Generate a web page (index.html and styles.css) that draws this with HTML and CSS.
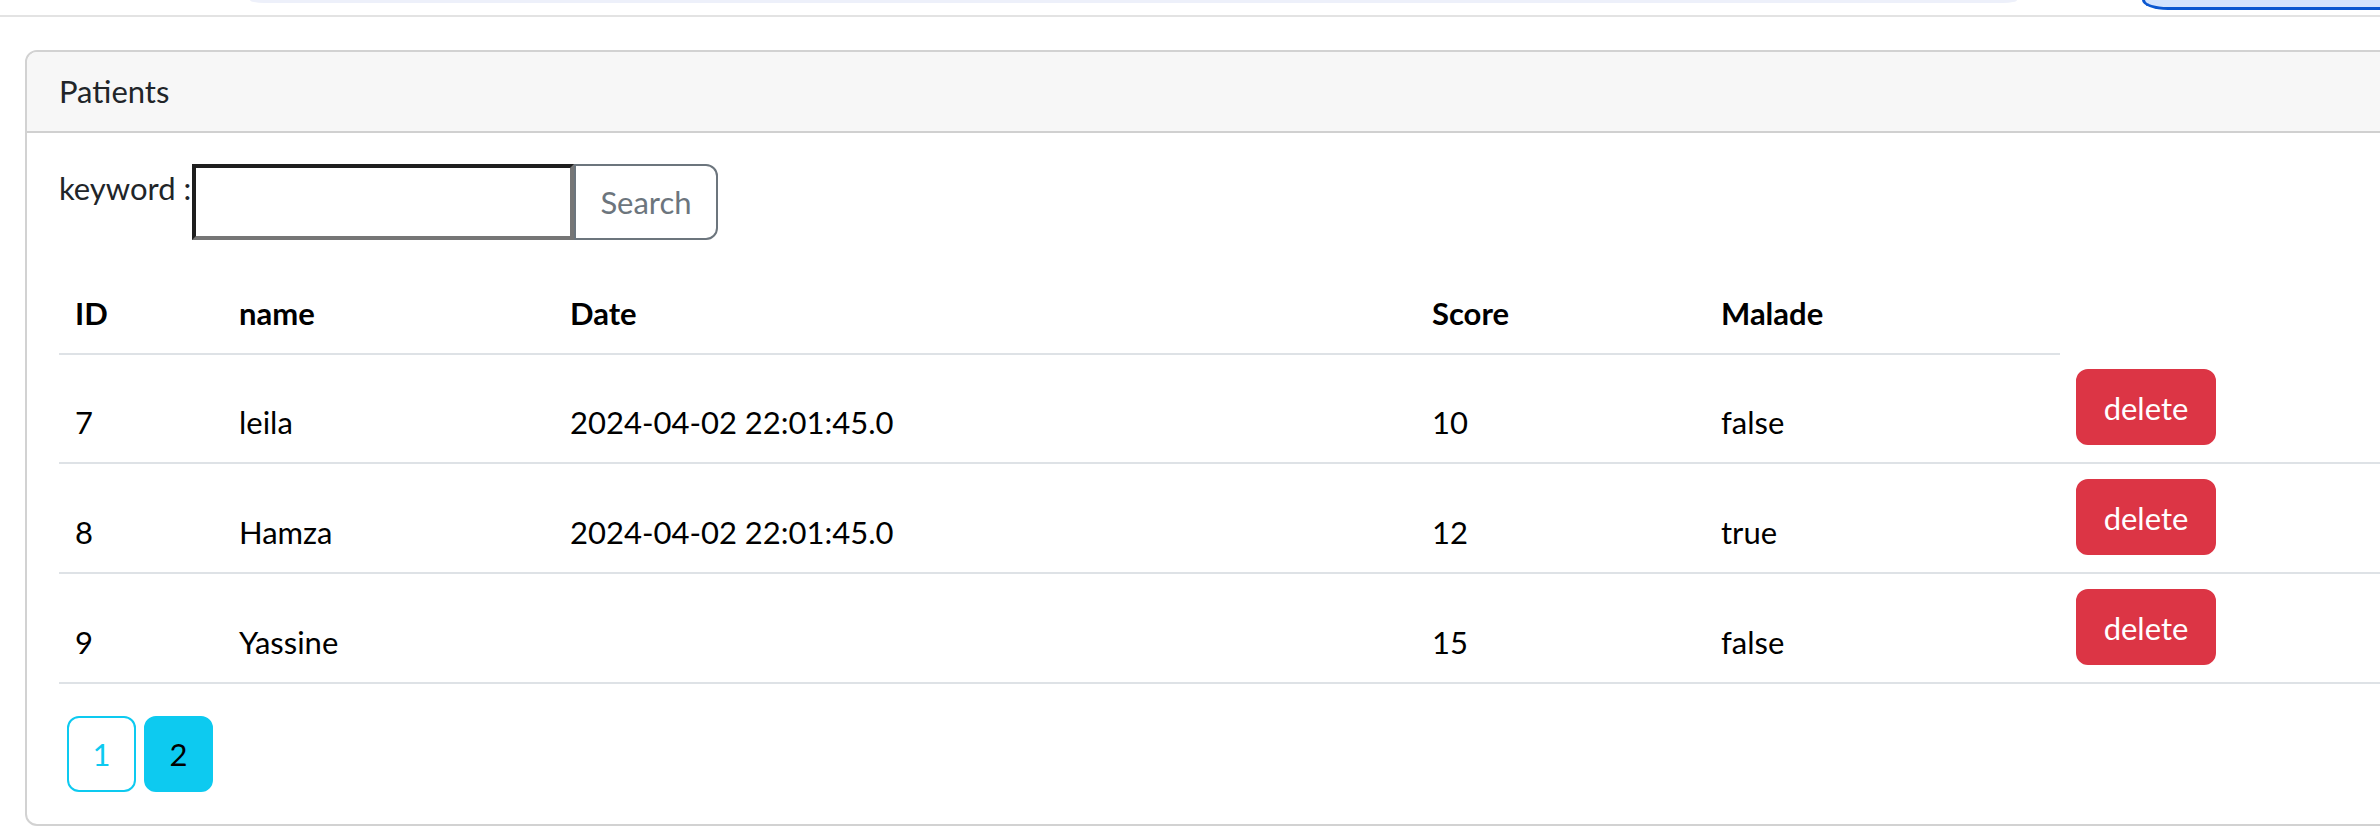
FILE: index.html
```html
<!DOCTYPE html>
<html lang="fr">
<head>
<meta charset="utf-8">
<title>Patients</title>
<link rel="stylesheet" href="styles.css">
</head>
<body>
<div class="chrome">
  <div class="omnibox"></div>
  <div class="profile"></div>
</div>
<main class="page">
  <section class="card">
    <div class="card-header">Patients</div>
    <div class="card-body">
      <form class="search">
        <label class="search-label" for="kw">keyword :</label>
        <input class="search-input" id="kw" type="text">
        <button class="btn-search" type="button">Search</button>
      </form>
      <table class="patients">
        <colgroup>
          <col class="c-id"><col class="c-name"><col class="c-date"><col class="c-score"><col class="c-malade"><col class="c-action">
        </colgroup>
        <thead>
          <tr><th>ID</th><th>name</th><th>Date</th><th>Score</th><th>Malade</th></tr>
        </thead>
        <tbody>
          <tr><td>7</td><td>leila</td><td>2024-04-02 22:01:45.0</td><td>10</td><td>false</td><td class="act"><a class="btn-delete">delete</a></td></tr>
          <tr><td>8</td><td>Hamza</td><td>2024-04-02 22:01:45.0</td><td>12</td><td>true</td><td class="act"><a class="btn-delete">delete</a></td></tr>
          <tr><td>9</td><td>Yassine</td><td></td><td>15</td><td>false</td><td class="act"><a class="btn-delete">delete</a></td></tr>
        </tbody>
      </table>
      <nav class="pager">
        <a class="page-btn">1</a>
        <a class="page-btn active">2</a>
      </nav>
    </div>
  </section>
</main>
</body>
</html>
```

FILE: styles.css
```css
html, body {
  margin: 0;
  padding: 0;
}
body {
  width: 2380px;
  height: 832px;
  overflow: hidden;
  background: #fff;
  font-family: Lato, "Liberation Sans", sans-serif;
  font-size: 31px;
  line-height: 48px;
  color: #212529;
}

/* browser chrome remnant */
.chrome {
  height: 15px;
  border-bottom: 2px solid #e3e3e3;
  display: flex;
  align-items: flex-start;
  overflow: hidden;
}
.omnibox {
  margin-left: 250px;
  width: 1767px;
  height: 3px;
  background: #edf0fa;
  border-radius: 0 0 14px 14px / 0 0 3px 3px;
}
.profile {
  margin-left: 125px;
  flex: 1;
  height: 7px;
  background: #d3e3fd;
  border-left: 3px solid #0b57d0;
  border-bottom: 3px solid #0b57d0;
  border-bottom-left-radius: 26px 10px;
}

.page {
  padding: 33px 0 0 25px;
}
.card {
  width: 2420px;
  border: 2px solid #d2d2d2;
  border-radius: 12px;
  background: #fff;
}
.card-header {
  padding: 15px 32px 16px;
  background: #f7f7f7;
  border-bottom: 2px solid #d0d0d0;
  border-radius: 10px 10px 0 0;
}
.card-body {
  padding: 31px 32px 32px;
}

.search {
  display: flex;
  height: 76px;
  margin: 0 0 33px;
}
.search-label {
  width: 133px;
  line-height: 48px;
  white-space: nowrap;
}
.search-input {
  box-sizing: border-box;
  width: 382px;
  height: 76px;
  margin: 0;
  padding: 0 8px;
  border-style: solid;
  border-width: 4px;
  border-color: #1e1e1e #767676 #767676 #1e1e1e;
  background: #fff;
  font: inherit;
  outline: none;
}
.btn-search {
  box-sizing: border-box;
  width: 144px;
  margin: 0;
  padding: 12px 0;
  border: 2px solid #6c757d;
  border-radius: 0 12px 12px 0;
  background: #fff;
  color: #6c757d;
  font: inherit;
  line-height: 48px;
}

.patients {
  width: 100%;
  table-layout: fixed;
  border-collapse: collapse;
  margin-bottom: 32px;
}
.c-id { width: 164px; }
.c-name { width: 331px; }
.c-date { width: 862px; }
.c-score { width: 289px; }
.c-malade { width: 355px; }
.patients th {
  padding: 16px;
  text-align: left;
  font-weight: 700;
  color: #000;
  border-bottom: 2px solid #dee2e6;
  vertical-align: bottom;
}
.patients td {
  padding: 16px;
  border-bottom: 2px solid #dee2e6;
  vertical-align: bottom;
  color: #000;
  white-space: nowrap;
}
.patients td.act {
  vertical-align: top;
  padding-top: 15px;
  padding-bottom: 17px;
}
.btn-delete {
  display: inline-block;
  box-sizing: border-box;
  width: 140px;
  padding: 13px 0 11px;
  text-align: center;
  border: 2px solid #dc3545;
  border-radius: 12px;
  background: #dc3545;
  color: #fff;
  line-height: 48px;
}

.pager {
  display: flex;
  height: 76px;
}
.page-btn {
  display: block;
  box-sizing: border-box;
  width: 69px;
  margin-left: 8px;
  padding: 12px 0;
  text-align: center;
  border: 2px solid #0dcaf0;
  border-radius: 12px;
  color: #0dcaf0;
  line-height: 48px;
}
.page-btn.active {
  background: #0dcaf0;
  color: #000;
}
```
